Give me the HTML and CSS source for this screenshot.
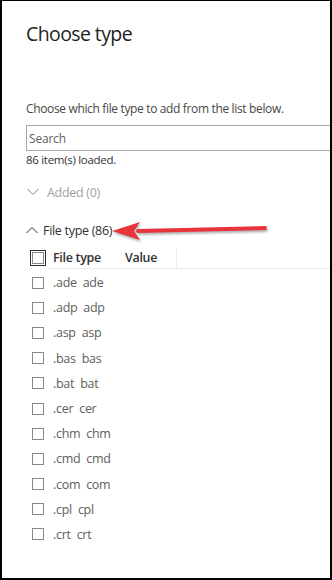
FILE: index.html
```html
<!DOCTYPE html>
<html lang="en">

<head>
  <meta charset="UTF-8">
  <meta name="viewport" content="width=device-width, initial-scale=1.0">
  <title>Choose type</title>
  <link rel="stylesheet" href="styles.css">
</head>

<body>
  <div class="frame">
    <h1 class="title">Choose type</h1>
    <p class="desc">Choose which file type to add from the list below.</p>
    <div class="search">
      <input type="text" placeholder="Search">
    </div>
    <div class="loaded">86 item(s) loaded.</div>

    <div class="group added">
      <svg class="chevron" width="12" height="8" viewBox="0 0 12 8">
        <polyline points="0.5,1 6,6.5 11.5,1" fill="none" stroke="#8a8886" stroke-width="1"/>
      </svg>
      <span>Added (0)</span>
    </div>

    <div class="group open">
      <svg class="chevron" width="12" height="8" viewBox="0 0 12 8">
        <polyline points="0.5,7 6,1.5 11.5,7" fill="none" stroke="#323130" stroke-width="1"/>
      </svg>
      <span>File type (86)</span>
    </div>

    <div class="list">
      <div class="header">
        <div class="check-cell">
          <span class="box-all"><span></span></span>
        </div>
        <div class="columns">
          <div class="col col-type">File type</div>
          <div class="col col-value">Value</div>
        </div>
      </div>
      <div class="row"><span class="box"></span><span class="ext">.ade</span><span>ade</span></div>
      <div class="row"><span class="box"></span><span class="ext">.adp</span><span>adp</span></div>
      <div class="row"><span class="box"></span><span class="ext">.asp</span><span>asp</span></div>
      <div class="row"><span class="box"></span><span class="ext">.bas</span><span>bas</span></div>
      <div class="row"><span class="box"></span><span class="ext">.bat</span><span>bat</span></div>
      <div class="row"><span class="box"></span><span class="ext">.cer</span><span>cer</span></div>
      <div class="row"><span class="box"></span><span class="ext">.chm</span><span>chm</span></div>
      <div class="row"><span class="box"></span><span class="ext">.cmd</span><span>cmd</span></div>
      <div class="row"><span class="box"></span><span class="ext">.com</span><span>com</span></div>
      <div class="row"><span class="box"></span><span class="ext">.cpl</span><span>cpl</span></div>
      <div class="row"><span class="box"></span><span class="ext">.crt</span><span>crt</span></div>
    </div>

    <svg class="arrow" width="170" height="30" viewBox="0 0 170 30">
      <line x1="155" y1="11" x2="28" y2="14" stroke="#e8343b" stroke-width="4" stroke-linecap="round"/>
      <polygon points="2,14 30,5 24,14 30,23" fill="#e8343b"/>
    </svg>
  </div>
</body>

</html>
```

FILE: styles.css
```css
* {
  box-sizing: border-box;
}

body {
  margin: 0;
  font-family: "Open Sans", "Noto Sans", Arial, sans-serif;
  color: #323130;
}

.frame {
  position: relative;
  width: 332px;
  height: 580px;
  border: 2px solid #000;
  border-top-width: 1px;
  padding-left: 24px;
  overflow: hidden;
  background: #fff;
}

.title {
  margin: 19px 0 0;
  font-size: 19.5px;
  line-height: 28px;
  font-weight: 400;
  color: #201f1e;
  letter-spacing: -0.6px;
}

.desc {
  margin: 52px 0 0;
  font-size: 12px;
  line-height: 18px;
  color: #484644;
  letter-spacing: -0.35px;
}

.search {
  margin-top: 7px;
  width: 400px;
}

.search input {
  display: block;
  width: 100%;
  height: 26px;
  margin: 0;
  padding: 0 2px;
  border: 1px solid #a6a6a6;
  border-radius: 0;
  font-family: inherit;
  font-size: 12px;
  letter-spacing: -0.2px;
  color: #323130;
  outline: none;
}

.search input::placeholder {
  color: #605e5c;
}

.loaded {
  margin-top: 1px;
  font-size: 11.5px;
  line-height: 16px;
  color: #323130;
  letter-spacing: -0.3px;
}

.group {
  display: flex;
  align-items: center;
  height: 28px;
  font-size: 12.5px;
  letter-spacing: -0.3px;
}

.group.added {
  margin-top: 10px;
  padding-left: 1px;
  color: #a19f9d;
}

.group.added .chevron {
  margin-right: 8px;
}

.group.open {
  margin-top: 10px;
  color: #323130;
}

.group.open .chevron {
  margin-right: 5px;
}

.list {
  margin-top: 3px;
  width: 400px;
}

.header {
  display: flex;
  height: 22px;
  margin-bottom: 1px;
}

.check-cell {
  width: 22px;
  padding-left: 4px;
  display: flex;
  align-items: center;
}

.box-all {
  display: block;
  width: 16px;
  height: 16px;
  border: 1px solid #323130;
  padding: 1px;
}

.box-all span {
  display: block;
  width: 100%;
  height: 100%;
  border: 1px solid #8a8886;
}

.columns {
  flex: 1;
  display: flex;
  align-items: center;
  border-bottom: 1px solid #edebe9;
  padding-left: 5px;
}

.col {
  font-size: 12.5px;
  font-weight: 600;
  color: #323130;
  line-height: 20px;
  letter-spacing: -0.3px;
}

.col-type {
  width: 72px;
}

.col-value {
  width: 52px;
  border-right: 1px solid #edebe9;
}

.row {
  display: flex;
  align-items: center;
  height: 25.2px;
  padding-left: 6px;
  font-size: 12.5px;
  color: #605e5c;
  letter-spacing: -0.3px;
}

.box {
  width: 12px;
  height: 12px;
  border: 1px solid #8a8886;
  margin-right: 9px;
}

.ext {
  margin-right: 6px;
}

.arrow {
  position: absolute;
  left: 108px;
  top: 216px;
  filter: drop-shadow(1px 2px 1px rgba(0, 0, 0, 0.3));
}
```
